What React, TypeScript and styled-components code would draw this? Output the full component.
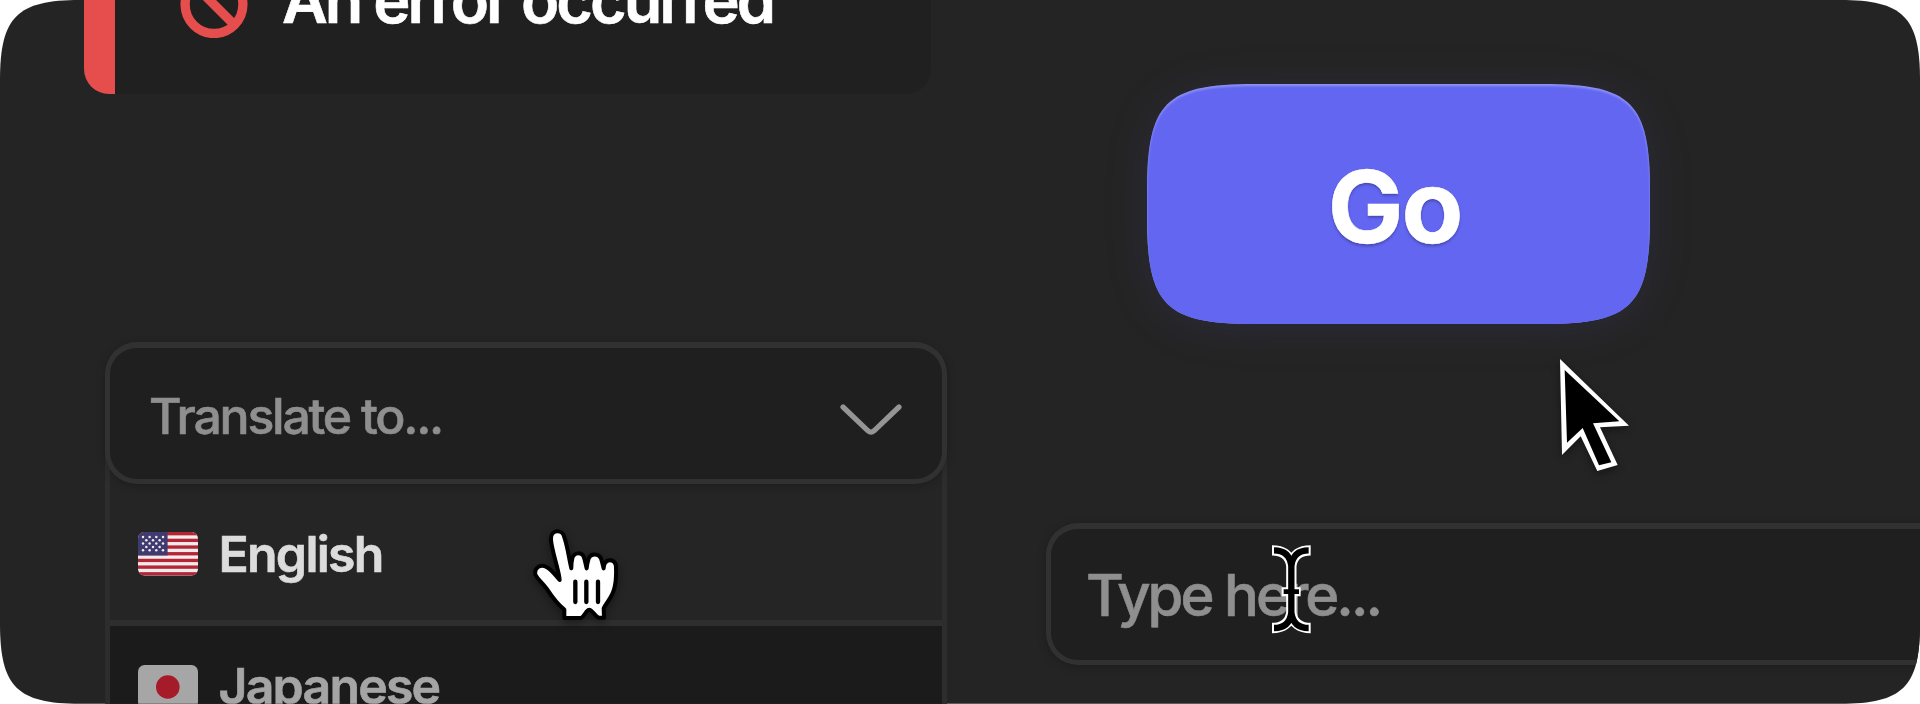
import React from "react";
import styled, { createGlobalStyle } from "styled-components";

const GlobalStyle = createGlobalStyle`
  * { box-sizing: border-box; }
  body { margin: 0; background: #fff; overflow: hidden; }
`;

/* Squircle-cornered rectangle: each corner is one cubic that leaves the edge
   `a` away from the corner, with handles ending `k` away from it. */
const smoothRect = (w: number, h: number, a: number, k: number) =>
  [
    `M${a} 0 H${w - a} C${w - k} 0 ${w} ${k} ${w} ${a}`,
    `V${h - a} C${w} ${h - k} ${w - k} ${h} ${w - a} ${h}`,
    `H${a} C${k} ${h} 0 ${h - k} 0 ${h - a}`,
    `V${a} C0 ${k} ${k} 0 ${a} 0 Z`,
  ].join(" ");

const Frame = styled.main`
  position: relative;
  display: grid;
  grid-template-columns: 1046px 1fr;
  width: 1920px;
  height: 704px;
  overflow: hidden;
  background: #242424;
  clip-path: path("${smoothRect(1920, 703.65, 80, 17)}");
  font-family: Inter, "Liberation Sans", sans-serif;
`;

const Column = styled.section`
  display: flex;
  flex-direction: column;
  align-items: flex-start;
  min-width: 0;
`;

const Label = styled.span<{ $size: number; $weight: number; $track: number; $color: string; $drop?: number }>`
  margin-top: ${(p) => p.$drop ?? 0}px;
  font-size: ${(p) => p.$size}px;
  font-weight: ${(p) => p.$weight};
  letter-spacing: ${(p) => p.$track}px;
  color: ${(p) => p.$color};
  -webkit-text-stroke: 0.6px ${(p) => p.$color};
  line-height: 1.2;
  white-space: nowrap;
`;

const Alert = styled.div`
  display: flex;
  align-items: center;
  gap: 34px;
  width: 847px;
  height: 180px;
  margin: -86px 0 0 84px;
  padding-left: 65px;
  border-left: 31px solid #e64e4d;
  border-radius: 25px;
  background: #202020;
`;

const SelectGroup = styled.div`
  width: 842px;
  margin: 248px 0 0 105px;
`;

const Field = styled.div<{ $pad: number }>`
  position: relative;
  z-index: 1;
  display: flex;
  align-items: center;
  justify-content: space-between;
  height: 142px;
  padding: 0 40px 0 ${(p) => p.$pad}px;
  border: 5px solid #313131;
  border-top-width: 6px;
  border-radius: 32px;
  background: #1f1f1f;
  box-shadow: 0 2px 8px rgba(0, 0, 0, 0.22);
`;

const Menu = styled.ul`
  margin: -50px 0 0;
  padding: 54px 0 0;
  list-style: none;
  border: solid #2d2d2d;
  border-width: 0 5px;
  background: #252525;
`;

const Option = styled.li<{ $active?: boolean }>`
  display: flex;
  align-items: center;
  gap: 21px;
  height: ${(p) => (p.$active ? 138 : 121)}px;
  padding-left: 27.5px;
  border-bottom: ${(p) => (p.$active ? "6px solid #2e2e2e" : "0")};
  background: ${(p) => (p.$active ? "#252525" : "#1b1b1b")};
`;

const GoButton = styled.button`
  position: relative;
  display: flex;
  align-items: center;
  justify-content: center;
  width: 503px;
  height: 240px;
  margin: 84px 0 0 101px;
  padding: 0 8px 0 0;
  border: 0;
  background: none;
  font-family: inherit;
  text-shadow: 0 2px 3px rgba(0, 0, 0, 0.3);
`;

const ButtonFace = styled.svg`
  position: absolute;
  inset: 0;
  overflow: visible;
  filter: drop-shadow(0 4px 22px rgba(98, 102, 241, 0.1));
`;

const ButtonText = styled(Label)`
  position: relative;
`;

const InputWrap = styled.div`
  width: 960px;
  margin-top: 199px;
`;

const Cursor = styled.svg<{ $x: number; $y: number; $shadow?: boolean }>`
  position: absolute;
  z-index: 3;
  left: ${(p) => p.$x}px;
  top: ${(p) => p.$y}px;
  overflow: visible;
  filter: ${(p) => (p.$shadow ? "drop-shadow(0 3px 4px rgba(0,0,0,.4))" : "none")};
`;

const BlockedIcon = () => (
  <svg width="68" height="68" viewBox="0 0 68 68" fill="none" stroke="#e64e4d" strokeWidth="9.3">
    <circle cx="34" cy="34.6" r="28.9" />
    <path d="M13.5 14 L54.5 55" />
  </svg>
);

const ChevronIcon = styled.svg`
  margin-top: 13px;
`;

const Chevron = () => (
  <ChevronIcon width="62" height="32" viewBox="0 0 62 32" fill="none" stroke="#959595" strokeWidth="5.2" strokeLinecap="round" strokeLinejoin="round">
    <path d="M3 3 L28 26.8 Q31 29.4 34 26.8 L59 3" />
  </ChevronIcon>
);

const stars = [5, 8.3, 11.6, 14.9, 18.2].flatMap((y, i) =>
  (i % 2 === 0 ? [5, 11.6, 18.3, 25] : [8.3, 15, 21.6]).map((x) => ({ x, y }))
);

const UsFlag = () => (
  <svg width="60" height="44" viewBox="0 0 60 44">
    <clipPath id="usClip"><rect width="60" height="43.5" rx="6.5" /></clipPath>
    <g clipPath="url(#usClip)">
      <rect width="60" height="44" fill="#efecec" />
      {[0, 1, 2, 3, 4, 5, 6].map((i) => (
        <rect key={i} y={i * 6.69} width="60" height="3.35" fill="#b52535" />
      ))}
      <rect width="29.6" height="23.4" fill="#3f3b70" />
      {stars.map(({ x, y }) => (
        <circle key={`${x}-${y}`} cx={x} cy={y} r="1.25" fill="#efecec" />
      ))}
    </g>
  </svg>
);

const JapanFlag = () => (
  <svg width="60" height="44" viewBox="0 0 60 44">
    <rect width="60" height="43.5" rx="6.5" fill="#a6a6a6" />
    <circle cx="29.8" cy="22" r="11.8" fill="#a61b29" />
  </svg>
);

export default function App() {
  return (
    <>
      <GlobalStyle />
      <Frame>
        <Column>
          <Alert>
            <BlockedIcon />
            <Label $size={63} $weight={600} $track={-3} $color="#fff" $drop={-6}>An error occurred</Label>
          </Alert>
          <SelectGroup>
            <Field $pad={39}>
              <Label $size={50} $weight={500} $track={-2.25} $color="#8f8f8f" $drop={4}>Translate to...</Label>
              <Chevron />
            </Field>
            <Menu>
              <Option $active>
                <UsFlag />
                <Label $size={50} $weight={600} $track={-1.75} $color="#dcdcdc">English</Label>
              </Option>
              <Option>
                <JapanFlag />
                <Label $size={50} $weight={600} $track={-1.8} $color="#a5a5a5" $drop={-1}>Japanese</Label>
              </Option>
            </Menu>
          </SelectGroup>
        </Column>
        <Column>
          <GoButton type="button">
            <ButtonFace width="503" height="240" viewBox="0 0 503 240">
              <defs>
                <clipPath id="face"><path d={smoothRect(503, 240, 107, 18.5)} /></clipPath>
                <filter id="soften" x="-5%" y="-5%" width="110%" height="110%"><feGaussianBlur stdDeviation="0.8" /></filter>
              </defs>
              <g clipPath="url(#face)">
                <rect width="503" height="240" fill="#9092f5" />
                <path d={smoothRect(503, 246, 107, 18.5)} transform="translate(0 2)" fill="#6266f1" filter="url(#soften)" />
              </g>
            </ButtonFace>
            <ButtonText $size={101} $weight={700} $track={-2} $color="#fff" $drop={5}>Go</ButtonText>
          </GoButton>
          <InputWrap>
            <Field $pad={35}>
              <Label $size={58} $weight={500} $track={-3} $color="#8f8f8f" $drop={2}>Type here...</Label>
            </Field>
          </InputWrap>
        </Column>

        <Cursor $x={510} $y={320} $shadow width="120" height="310" viewBox="0 0 360 930">
          <path
            d="M163 894 V869 C140 851 127 832 110 806 C97 787 84 780 76 764 C72 743 92 730 111 742 C126 751 138 768 149 780 C147 750 127 700 123 660 C121 626 158 627 163 652 C174 685 176 712 184 745 C184 735 185 722 187 715 C192 695 217 696 222 713 C226 725 227 735 230 745 C231 735 233 725 236 715 C242 699 267 700 273 716 C277 727 278 735 281 745 C281 738 283 732 286 728 C294 716 318 718 318 742 C319 770 317 790 313 805 C306 834 290 846 281 865 L282 893 H266 C254 888 246 868 237 869 C229 869 224 889 213 894 Z"
            fill="#fff" stroke="#000" strokeWidth="12" strokeLinejoin="round"
          />
          <path d="M196 785 V846 M229 785 V846 M264 785 V846" stroke="#000" strokeWidth="13" strokeLinecap="round" />
        </Cursor>

        <Cursor $x={1520} $y={340} $shadow width="140" height="150" viewBox="0 0 420 450">
          <path d="M120 57 L327 257 L240 262 L293 375 L232 393 L182 289 L126 345 Z" fill="#fff" />
          <path d="M134 90 L298 244 L219 250 L274 367 L237 376 L188 264 L141 308 Z" fill="#000" />
        </Cursor>

        <Cursor $x={1270} $y={540} width="45" height="100" viewBox="720 120 135 300" fill="none">
          <g stroke="#fff">
            <path d="M726 151 C756 151 780 163 784 198 V337 C780 372 756 384 726 384 M842 151 C812 151 788 163 784 198 V337 C788 372 812 384 842 384" strokeWidth="31" />
            <path d="M755 275 H812" strokeWidth="27" />
          </g>
          <g stroke="#000">
            <path d="M732 151 C758 151 780 163 784 198 V337 C780 372 758 384 732 384 M836 151 C810 151 788 163 784 198 V337 C788 372 810 384 836 384" strokeWidth="19" />
            <path d="M761 275 H807" strokeWidth="14" />
          </g>
        </Cursor>
      </Frame>
    </>
  );
}
